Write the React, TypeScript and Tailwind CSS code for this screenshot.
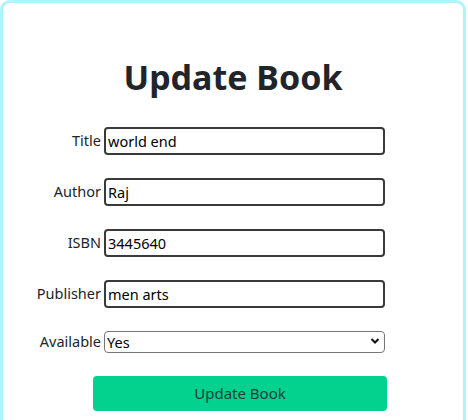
import React from 'react';

const fields = [
  { label: 'Title', value: 'world end' },
  { label: 'Author', value: 'Raj' },
  { label: 'ISBN', value: '3445640' },
  { label: 'Publisher', value: 'men arts' },
];

const App: React.FC = () => {
  return (
    <div className="min-h-screen bg-white pr-[2px] font-['Noto_Sans','Open_Sans',sans-serif] text-[#212529]">
      <div className="h-[440px] rounded-[10px] border-[3px] border-[#adf4fc] pt-[47px]">
        <h1 className="text-center text-[34px] leading-[54px] font-bold">Update Book</h1>

        <form className="mt-[23px] ml-[7px] flex flex-col">
          {fields.map((field) => (
            <div key={field.label} className="mb-[23px] flex items-center">
              <label className="w-[94px] pr-[3px] text-right text-[14.5px]">{field.label}</label>
              <input
                defaultValue={field.value}
                className="h-[28px] w-[281px] rounded-[4px] border-2 border-[#3a3a3a] px-[2px] text-[14.5px] text-black outline-none"
              />
            </div>
          ))}

          <div className="-mt-[1px] flex items-center">
            <label className="w-[94px] pr-[3px] text-right text-[14.5px]">Available</label>
            <div className="relative">
              <select
                defaultValue="Yes"
                className="h-[22px] w-[281px] appearance-none rounded-[4px] border border-[#767676] bg-white pl-[2px] text-[14.5px] leading-[20px] text-black outline-none"
              >
                <option>Yes</option>
                <option>No</option>
              </select>
              <svg
                className="pointer-events-none absolute top-[7px] right-[5px]"
                width="10"
                height="8"
                viewBox="0 0 10 8"
                fill="none"
              >
                <path d="M1.5 2 L5 5.5 L8.5 2" stroke="#111" strokeWidth="2" />
              </svg>
            </div>
          </div>

          <button
            type="button"
            className="mt-[22px] ml-[83px] h-[35px] w-[294px] rounded-[4px] bg-[#03d28e] text-[15px] text-[#1e3d3a]"
          >
            Update Book
          </button>
        </form>
      </div>
    </div>
  );
};

export default App;
